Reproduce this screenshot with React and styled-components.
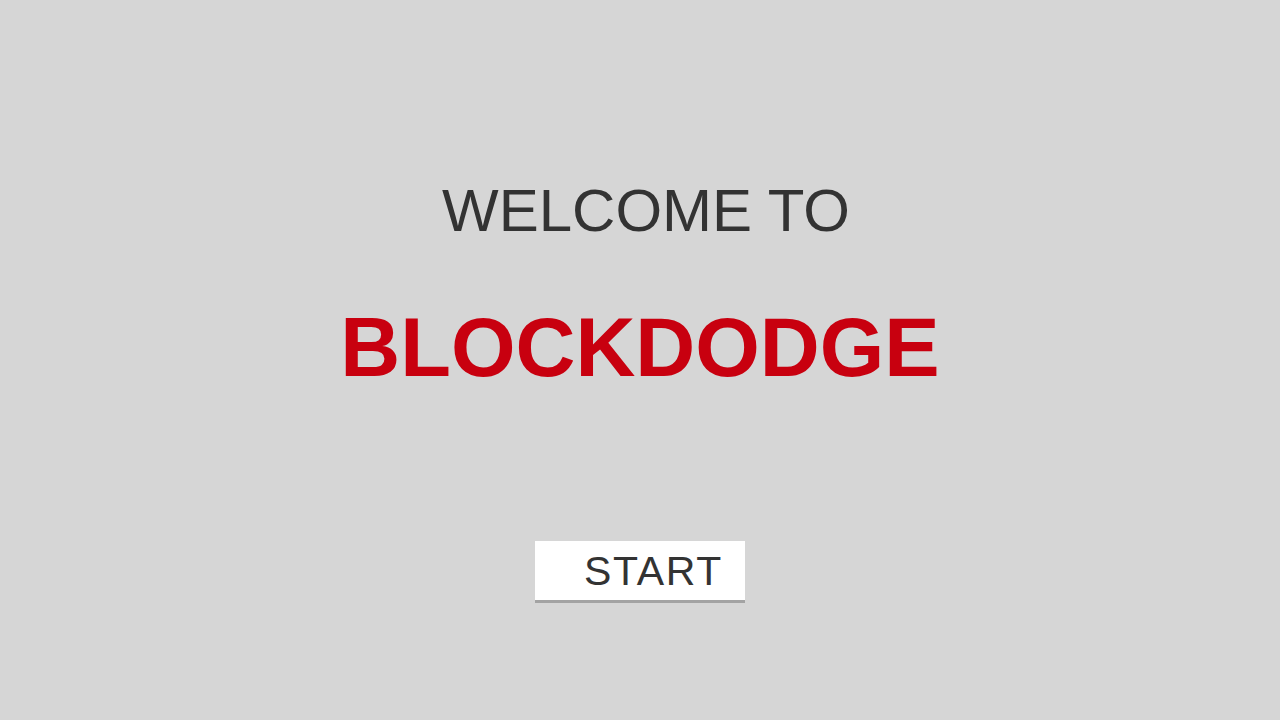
import React from "react";
import styled, { createGlobalStyle } from "styled-components";

const Global = createGlobalStyle`
  html, body { margin: 0; padding: 0; background: #d6d6d6; }
  body { font-family: "Liberation Sans", Arial, sans-serif; }
`;

const Screen = styled.main`
  width: 1280px;
  height: 720px;
  box-sizing: border-box;
  padding-top: 181px;
  display: flex;
  flex-direction: column;
  align-items: center;
  background: #d6d6d6;
  overflow: hidden;
`;

const Welcome = styled.h2`
  margin: 0 0 0 12px;
  font-size: 60px;
  line-height: 60px;
  font-weight: 400;
  color: #333333;
  white-space: nowrap;
`;

const Title = styled.h1`
  margin: 65px 0 0 0;
  font-size: 83px;
  line-height: 83px;
  font-weight: 700;
  color: #c8000f;
  white-space: nowrap;
`;

const StartButton = styled.button`
  margin-top: 152px;
  width: 210px;
  height: 62px;
  box-sizing: border-box;
  padding: 0 0 0 49px;
  border: none;
  border-bottom: 3px solid #a3a3a3;
  background: #ffffff;
  color: #333333;
  font-family: "Liberation Sans", Arial, sans-serif;
  font-size: 41px;
  letter-spacing: 1.7px;
  line-height: 58px;
  text-align: left;
  cursor: pointer;
`;

export default function App() {
  return (
    <>
      <Global />
      <Screen>
        <Welcome>WELCOME TO</Welcome>
        <Title>BLOCKDODGE</Title>
        <StartButton>START</StartButton>
      </Screen>
    </>
  );
}
